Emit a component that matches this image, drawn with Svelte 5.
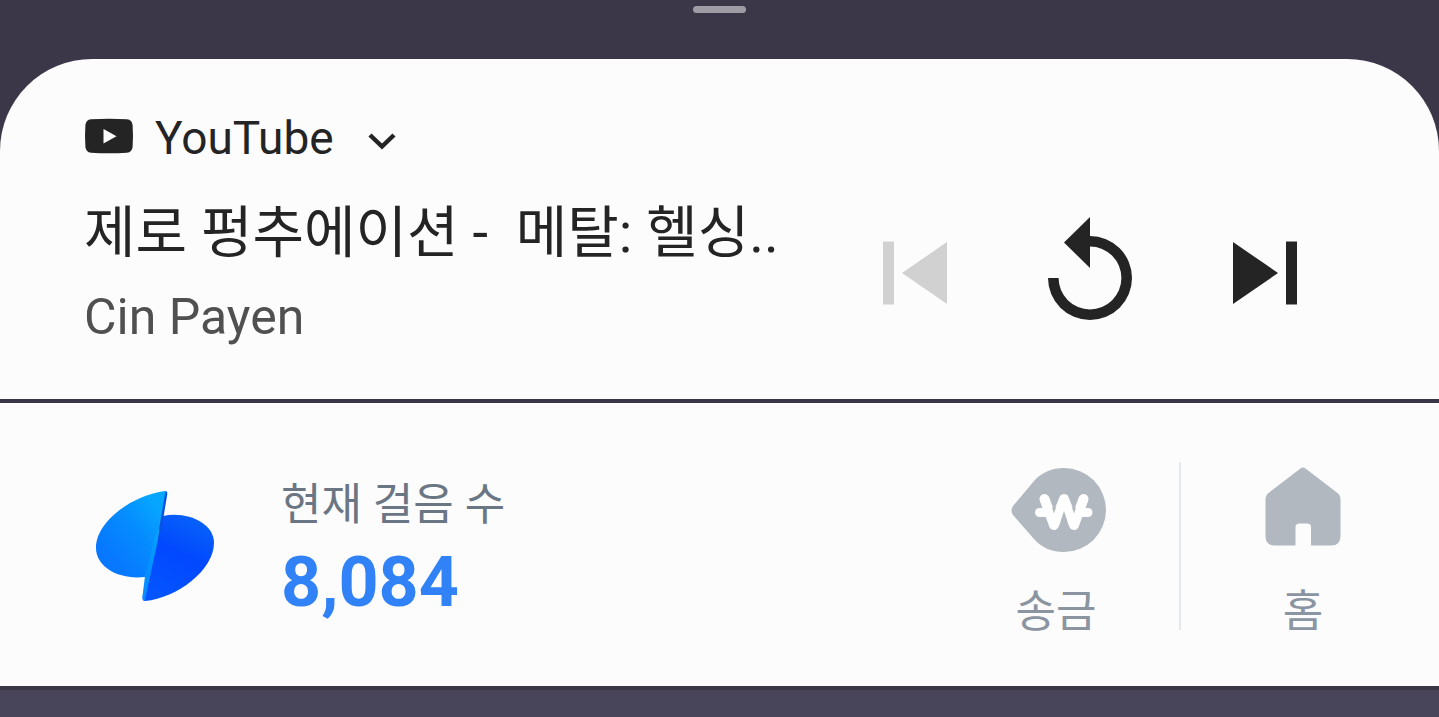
<script lang="ts">
  interface Track {
    app: string;
    title: string;
    artist: string;
  }

  export let track: Track = {
    app: "YouTube",
    title: "제로 펑추에이션 -  메탈: 헬싱..",
    artist: "Cin Payen",
  };
  export let steps = 8084;
  export let hasPrevious = false;

  $: stepsText = steps.toLocaleString("en-US");
</script>

<main class="shade">
  <div class="handle-bar">
    <span class="handle"></span>
  </div>

  <!-- Media -->
  <section class="media">
    <div class="media-info">
      <button class="app-btn">
        <svg class="app-icon" width="50" height="40" viewBox="0 0 50 40">
          <path
            d="M7 1.3Q25 .3 43 1.3Q48 1.8 48.6 7Q49.4 18 48.6 29Q48 34.2 43 34.7Q25 35.7 7 34.7Q2 34.2 1.4 29Q.6 18 1.4 7Q2 1.8 7 1.3Z"
            fill="#242424"
          />
          <path d="M19.5 11v14.5l13-7.2z" fill="#fcfcfc" />
        </svg>
        <span>{track.app}</span>
        <svg class="chevron" width="28" height="24" viewBox="0 0 28 24">
          <path d="M2 9L14 20.5L26 9" fill="none" stroke="#242424" stroke-width="4.5" />
        </svg>
      </button>
      <h1 class="title">{track.title}</h1>
      <p class="artist">{track.artist}</p>
    </div>

    <div class="controls">
      <button class="control" aria-label="이전" disabled={!hasPrevious}>
        <svg width="128" height="128" viewBox="0 0 128 128" fill="currentColor">
          <path d="M32 32.5h11v63H32zM96 33v62L51 64z" />
        </svg>
      </button>
      <button class="control" aria-label="다시 재생">
        <svg width="128" height="128" viewBox="0 0 128 128" fill="currentColor">
          <path d="M64 8v51L38 33.5z" />
          <path d="M22 69h10.6A31.4 31.4 0 1 0 64 37.6V27A42 42 0 1 1 22 69z" />
        </svg>
      </button>
      <button class="control" aria-label="다음">
        <svg width="128" height="128" viewBox="0 0 128 128" fill="currentColor">
          <path d="M85 32.5h11v63H85zM32 33v62L77 64z" />
        </svg>
      </button>
    </div>
  </section>

  <!-- Steps -->
  <section class="steps">
    <svg class="logo" width="120" height="112" viewBox="0 0 120 112">
      <defs>
        <linearGradient id="wing-left" x1="0.95" y1="0.25" x2="0.35" y2="0.9">
          <stop offset="0" stop-color="#06a6ff" />
          <stop offset="0.45" stop-color="#058cff" />
          <stop offset="1" stop-color="#0778ff" />
        </linearGradient>
        <linearGradient id="wing-right" x1="0.7" y1="0" x2="0.3" y2="1">
          <stop offset="0" stop-color="#0763f8" />
          <stop offset="0.45" stop-color="#0248ff" />
          <stop offset="1" stop-color="#0455ff" />
        </linearGradient>
        <linearGradient id="fold" x1="0" y1="0" x2="0" y2="1">
          <stop offset="0" stop-color="#06a6ff" />
          <stop offset="0.5" stop-color="#0590ff" />
          <stop offset="1" stop-color="#0a8cff" />
        </linearGradient>
      </defs>
      <path
        d="M68 26C92 21 119 33 119 53C119 80 82 108 50 111C47 111 47.5 108 48 105L58 56Z"
        fill="url(#wing-right)"
      />
      <path
        d="M70 1C38 5 1 31 1 58C1 76 22 90 50 87L63 48L71 3Q72 1 70 1Z"
        fill="url(#wing-left)"
      />
      <path d="M70.5 1.2Q72.5 1 72.3 4L68.5 27L63.5 50L62.5 48Z" fill="#0550dc" />
      <path d="M64.5 38L62.5 52L50 110Q47 111 47.5 106L50 86L60 46Z" fill="url(#fold)" />
    </svg>

    <div class="count">
      <p class="count-label">현재 걸음 수</p>
      <p class="count-value">{stepsText}</p>
    </div>

    <nav class="shortcuts">
      <button class="shortcut">
        <svg width="102" height="86" viewBox="-6 0 102 86">
          <path
            d="M2 39L23 14C31 5 41 1 53 1A42 42 0 0 1 53 85C41 85 31 81 23 72L2 48Q-1 43.5 2 39Z"
            fill="#b1b8c0"
          />
          <g fill="none" stroke="#fff" stroke-linecap="round" stroke-linejoin="round">
            <path d="M28.5 45.5h48.5" stroke-width="9" />
            <path d="M33.5 32L43 58L53 32L63 58L72.5 32" stroke-width="10" />
          </g>
          <path d="M53 44l-3.5 10.5h7zM43 46.5l-2-6h4zM63 46.5l-2-6h4z" fill="#b1b8c0" />
        </svg>
        <span>송금</span>
      </button>
      <button class="shortcut">
        <svg width="96" height="86" viewBox="0 0 96 86">
          <path
            d="M45.5 1.5Q48 -.5 50.5 1.5L82.5 26Q85.5 28.5 85.5 32.5V69Q85.5 78.5 76.5 78.5H56V60Q56 56.5 52 56.5H44.5Q40.5 56.5 40.5 60V78.5H19.5Q10.5 78.5 10.5 69V32.5Q10.5 28.5 13.5 26Z"
            fill="#b1b8c0"
          />
        </svg>
        <span>홈</span>
      </button>
    </nav>
  </section>
</main>

<style>
  :global(body) {
    margin: 0;
    background: #48455b;
  }

  .shade {
    font-family: Roboto, "Noto Sans CJK KR", sans-serif;
    background: #3b3748;
    padding-bottom: 4px;
  }

  button {
    padding: 0;
    border: none;
    background: none;
    color: inherit;
    font: inherit;
    cursor: pointer;
  }
  svg {
    display: block;
    flex-shrink: 0;
  }
  h1,
  p {
    margin: 0;
  }

  /* ── Handle ── */
  .handle-bar {
    display: flex;
    justify-content: center;
    height: 53px;
    padding-top: 6px;
  }
  .handle {
    width: 53px;
    height: 7px;
    border-radius: 4px;
    background: #9f9ca5;
  }

  /* ── Media ── */
  .media {
    display: flex;
    align-items: center;
    justify-content: space-between;
    padding: 49px 87px 50px 84px;
    border-radius: 92px 92px 0 0;
    background: #fcfcfc;
    color: #242424;
  }
  .media-info {
    min-width: 0;
  }
  .app-btn {
    display: flex;
    align-items: center;
    font-size: 46px;
    line-height: 60px;
  }
  .app-icon {
    margin-right: 21px;
  }
  .chevron {
    margin-left: 34px;
  }
  .title {
    margin-top: 25px;
    font-size: 56px;
    font-weight: 400;
    line-height: 80px;
    white-space: pre;
  }
  .artist {
    margin-top: 12px;
    font-size: 50px;
    line-height: 64px;
    color: #505050;
  }

  .controls {
    display: flex;
    padding-top: 88px;
  }
  .control {
    display: flex;
    justify-content: center;
    width: 175px;
  }
  .control:disabled {
    color: #d1d1d1;
    cursor: default;
  }

  /* ── Steps ── */
  .steps {
    display: flex;
    align-items: center;
    margin-top: 4px;
    padding: 59px 14px 56px 95px;
    background: #fcfcfc;
  }
  .count {
    flex: 1;
    margin-left: 66px;
  }
  .count-label {
    font-size: 44px;
    line-height: 60px;
    color: #6b7684;
  }
  .count-value {
    margin-top: 12px;
    font-size: 70px;
    font-weight: 700;
    line-height: 70px;
    color: #3182f6;
  }

  .shortcuts {
    display: flex;
  }
  .shortcut {
    display: flex;
    flex-direction: column;
    align-items: center;
    gap: 41px;
    width: 246px;
    padding-top: 5px;
    font-size: 44px;
    line-height: 36px;
    color: #8b95a1;
  }
  .shortcut + .shortcut {
    border-left: 2px solid #e5e8eb;
  }
</style>
